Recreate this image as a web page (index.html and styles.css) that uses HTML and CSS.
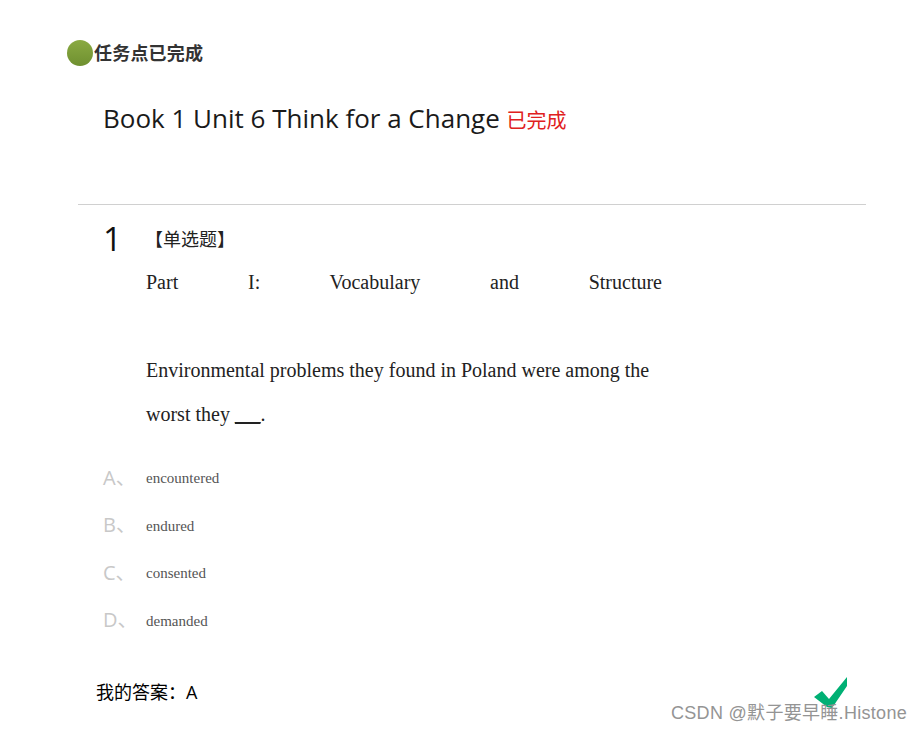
FILE: index.html
```html
<!DOCTYPE html>
<html lang="zh-CN">
<head>
<meta charset="utf-8">
<title>Book 1 Unit 6</title>
<link rel="stylesheet" href="styles.css">
</head>
<body>
<div class="page">
  <div class="status">
    <span class="status-dot"></span>
    <span class="status-text">任务点已完成</span>
  </div>
  <h1 class="title">Book 1 Unit 6 Think for a Change <span class="title-state">已完成</span></h1>
  <hr class="rule">
  <section class="question">
    <div class="q-head">
      <span class="q-num">1</span>
      <span class="q-type">【单选题】</span>
    </div>
    <div class="q-body">
      <p class="q-line q-spread">Part I: Vocabulary and Structure</p>
      <p class="q-line">&nbsp;</p>
      <p class="q-line">Environmental problems they found in Poland were among the worst they <b class="blank">___</b>.</p>
    </div>
    <ul class="options">
      <li class="option"><span class="opt-key">A、</span><span class="opt-text">encountered</span></li>
      <li class="option"><span class="opt-key">B、</span><span class="opt-text">endured</span></li>
      <li class="option"><span class="opt-key">C、</span><span class="opt-text">consented</span></li>
      <li class="option"><span class="opt-key">D、</span><span class="opt-text">demanded</span></li>
    </ul>
    <div class="answer">我的答案：<span class="answer-val">A</span></div>
  </section>
</div>
<svg class="tick" viewBox="0 0 34 32" width="34" height="32" aria-hidden="true"><path d="M0 20 L8 14 L15 22 L33 0 L33 9 L18 31 L13 30 Z" fill="#00b074"/></svg>
<div class="mark">CSDN @默子要早睡.Histone</div>
</body>
</html>
```
FILE: styles.css
```css
html, body {
  margin: 0;
  padding: 0;
  height: 731px;
  overflow: hidden;
  background: #fff;
}
.page {
  padding: 40px 56px 0 78px;
  font-family: "Open Sans", "Noto Sans CJK SC", sans-serif;
  color: #181e33;
}
.status {
  display: flex;
  align-items: center;
  gap: 1px;
  margin-left: -11px;
  height: 26px;
}
.status-dot {
  width: 26px;
  height: 26px;
  border-radius: 50%;
  background: linear-gradient(#8aaa42, #6f9030);
}
.status-text {
  font: 700 18px/24px "Noto Sans CJK SC", sans-serif;
  color: #333;
  letter-spacing: 0.2px;
  margin-top: -2px;
}
.title {
  margin: 31px 0 0 25px;
  font-size: 26px;
  font-weight: 400;
  line-height: 42px;
  color: #1a1a1a;
  white-space: nowrap;
}
.title-state {
  font: 400 20px "Noto Sans CJK SC", sans-serif;
  color: #e02020;
}
.rule {
  margin: 65px 0 0;
  border: 0;
  border-top: 1px solid #d0d0d0;
}
.q-head {
  display: flex;
  align-items: center;
  margin: 15px 0 0 25px;
  height: 40px;
}
.q-num {
  width: 42px;
  font-size: 33px;
  line-height: 40px;
  margin-top: -3px;
  color: #111;
}
.q-type {
  font: 400 18px/24px "Noto Sans CJK SC", sans-serif;
  color: #222;
  margin-top: -5px;
}
.q-body {
  margin: 0 0 0 68px;
  width: 516px;
  font-family: "Liberation Serif", serif;
  font-size: 20px;
  line-height: 44px;
  color: #222;
}
.q-line {
  margin: 0;
}
.q-spread {
  text-align: justify;
  text-align-last: justify;
}
.blank {
  font-size: 17px;
  line-height: 20px;
  font-weight: 700;
  text-decoration: underline 2px #222;
  text-underline-offset: 1px;
}
.options {
  list-style: none;
  margin: 19px 0 0 25px;
  padding: 0;
}
.option {
  display: flex;
  align-items: center;
  height: 47.5px;
}
.opt-key {
  width: 43px;
  font-size: 20px;
  line-height: 24px;
  margin-top: -2px;
  color: #c8c8c8;
  font-family: "Open Sans", "Noto Sans CJK SC", sans-serif;
}
.opt-text {
  font: 15px "Liberation Serif", serif;
  color: #555;
}
.answer {
  margin: 33px 0 0 18px;
  font: 18px "Noto Sans CJK SC", sans-serif;
  line-height: 26px;
  color: #000;
}
.answer-val {
  font-family: "Open Sans", sans-serif;
}
.tick {
  position: absolute;
  left: 814px;
  top: 677px;
}
.mark {
  position: absolute;
  left: 671px;
  top: 701px;
  font: 18px/24px "Liberation Sans", "Noto Sans CJK SC", sans-serif;
  letter-spacing: 0.3px;
  color: #949494;
  white-space: nowrap;
}
```
